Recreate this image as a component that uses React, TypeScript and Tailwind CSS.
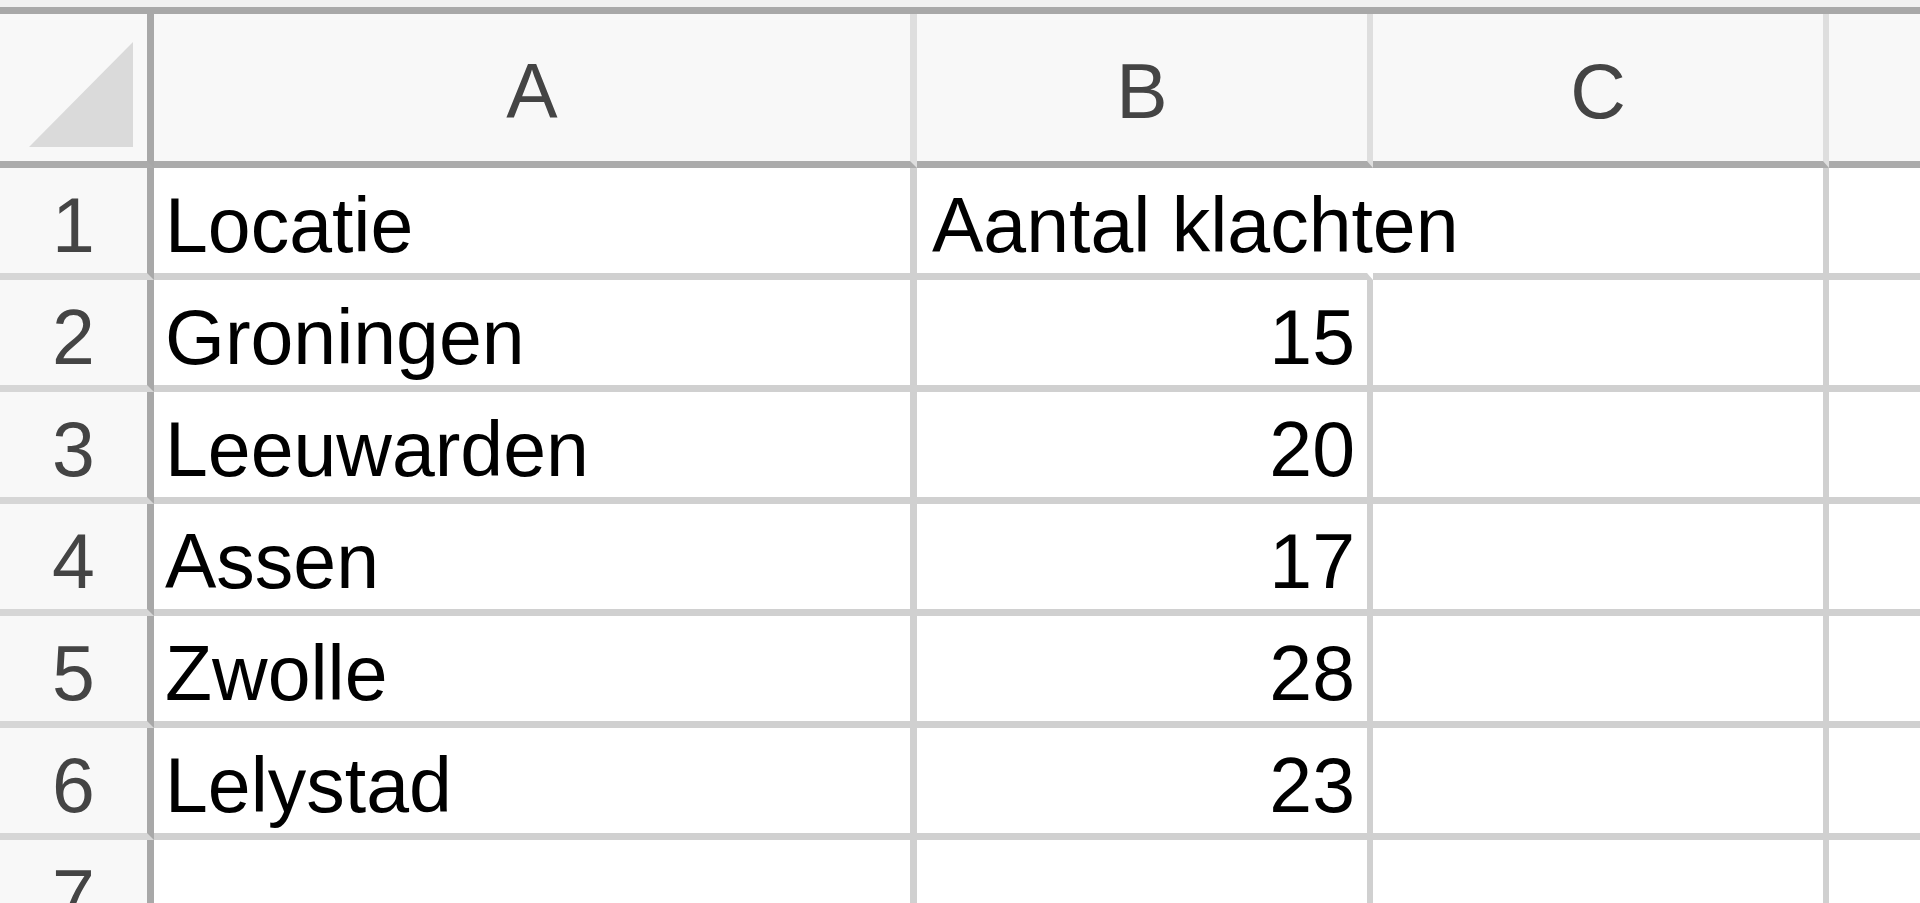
import React from "react";

const rows: [string, string][] = [
  ["Locatie", "Aantal klachten"],
  ["Groningen", "15"],
  ["Leeuwarden", "20"],
  ["Assen", "17"],
  ["Zwolle", "28"],
  ["Lelystad", "23"],
  ["", ""],
];

export default function App() {
  return (
    <div
      className="h-[903px] w-full overflow-hidden bg-white text-black"
      style={{ fontFamily: '"Liberation Sans", Arial, sans-serif' }}
    >
      {/* top edge */}
      <div className="h-[7px] bg-[#f0f0f0]" />
      <div className="h-[7px] bg-[#a8a8a8]" />

      <div className="grid grid-cols-[154px_763px_456px_456px_1fr] grid-rows-[154px] auto-rows-[112px] text-[77px] leading-[77px]">
        {/* Column headers */}
        <div className="flex items-end justify-end border-r-[7px] border-b-[7px] border-r-[#a8a8a8] border-b-[#ababab] bg-[#f8f8f8] pr-[14px] pb-[14px]">
          <svg width="104" height="105" viewBox="0 0 104 105">
            <polygon points="104,0 104,105 0,105" fill="#dadada" />
          </svg>
        </div>
        <div className="border-r-[7px] border-b-[7px] border-r-[#dedede] border-b-[#ababab] bg-[#f8f8f8] pt-[39px] text-center text-[#444]">
          A
        </div>
        <div className="border-r-[6px] border-b-[7px] border-r-[#dedede] border-b-[#ababab] bg-[#f8f8f8] pt-[39px] text-center text-[#444]">
          B
        </div>
        <div className="border-r-[6px] border-b-[7px] border-r-[#dedede] border-b-[#ababab] bg-[#f8f8f8] pt-[39px] text-center text-[#444]">
          C
        </div>
        <div className="border-b-[7px] border-b-[#ababab] bg-[#f8f8f8]" />

        {rows.map(([loc, val], i) => (
          <React.Fragment key={i}>
            <div className="border-r-[7px] border-b-[7px] border-r-[#a8a8a8] border-b-[#d6d6d6] bg-[#f8f8f8] pt-[19px] text-center text-[#444]">
              {i + 1}
            </div>
            <div className="whitespace-nowrap border-r-[7px] border-b-[7px] border-[#d0d0d0] pt-[19px] pl-[11px]">
              {loc}
            </div>
            <div
              className={`whitespace-nowrap border-r-[6px] border-b-[7px] border-[#d0d0d0] pt-[19px] ${
                i === 0 ? "relative z-10 overflow-visible border-r-transparent pl-[15px]" : "pr-[12px] text-right"
              }`}
            >
              {val}
            </div>
            <div className="border-r-[6px] border-b-[7px] border-[#d0d0d0]" />
            <div className="border-b-[7px] border-[#d0d0d0]" />
          </React.Fragment>
        ))}
      </div>
    </div>
  );
}
